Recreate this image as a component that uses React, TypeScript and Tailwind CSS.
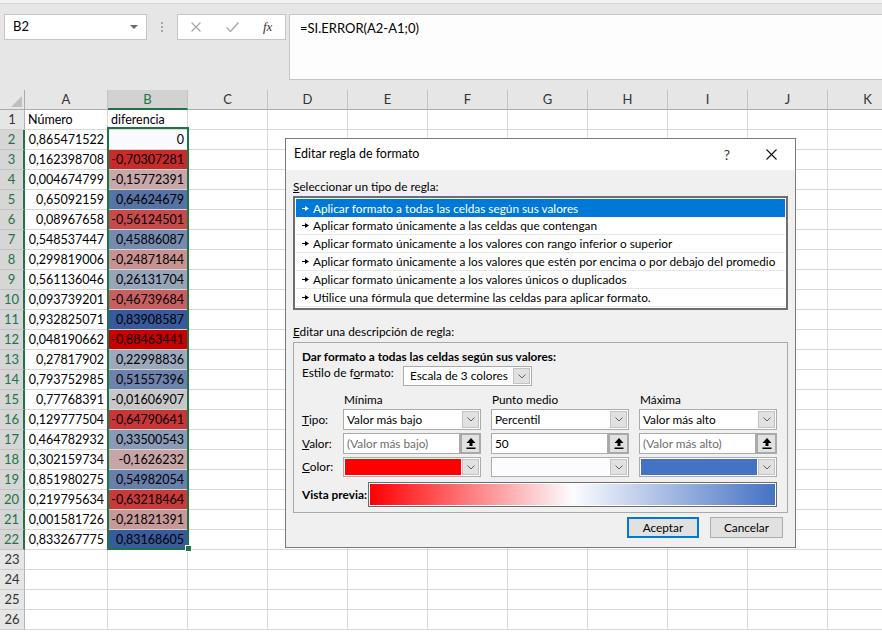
import React from 'react';

const colA = [
  '0,865471522', '0,162398708', '0,004674799', '0,65092159', '0,08967658', '0,548537447', '0,299819006',
  '0,561136046', '0,093739201', '0,932825071', '0,048190662', '0,27817902', '0,793752985', '0,77768391',
  '0,129777504', '0,464782932', '0,302159734', '0,851980275', '0,219795634', '0,001581726', '0,833267775',
];

const colB = [
  0, -0.70307281, -0.15772391, 0.64624679, -0.56124501, 0.45886087, -0.24871844, 0.26131704, -0.46739684,
  0.83908587, -0.88463441, 0.22998836, 0.51557396, -0.01606907, -0.64790641, 0.33500543, -0.1626232,
  0.54982054, -0.63218464, -0.21821391, 0.83168605,
];

const sorted = [...colB].sort((a, b) => a - b);
const vMin = sorted[0];
const vMax = sorted[sorted.length - 1];
const vMid = sorted[Math.floor(sorted.length / 2)];

const mix = (a: number[], b: number[], t: number) => a.map((x, i) => x + (b[i] - x) * t);

// escala de 3 colores, oscurecida cuando la celda está seleccionada
function scaleColor(v: number, shaded: boolean) {
  const red = [255, 0, 0], mid = [252, 252, 255], blue = [68, 114, 196];
  let c = v <= vMid ? mix(red, mid, (v - vMin) / (vMid - vMin)) : mix(mid, blue, (v - vMid) / (vMax - vMid));
  if (shaded) c = c.map(x => x * 0.79);
  return `rgb(${c.map(x => Math.round(x)).join(',')})`;
}

const fmt = (v: number) => (v === 0 ? '0' : String(v).replace('.', ','));

const otherCols = ['C', 'D', 'E', 'F', 'G', 'H', 'I', 'J', 'K'];

const Chevron = () => (
  <svg width="8" height="5" viewBox="0 0 8 5"><path d="M0.5 0.5L4 4L7.5 0.5" fill="none" stroke="#606060" strokeWidth="1" /></svg>
);

const DropButton = () => (
  <div className="w-[17px] my-[1px] mr-[1px] bg-[#e1e1e1] border border-[#c2c2c2] flex items-center justify-center shrink-0">
    <Chevron />
  </div>
);

const RefButton = () => (
  <div className="w-[21px] h-full bg-[#e1e1e1] border-2 border-[#a9a9a9] flex items-center justify-center shrink-0">
    <svg width="10" height="11" viewBox="0 0 10 11">
      <path d="M5 0L9.5 5H6.5V8H3.5V5H0.5Z" fill="#000" />
      <rect x="0.5" y="9.5" width="9" height="1.5" fill="#000" />
    </svg>
  </div>
);

const Combo: React.FC<{ text: string }> = ({ text }) => (
  <div className="w-[138px] h-full bg-white border border-[#acacac] flex">
    <span className="flex-1 pl-[3px] leading-[19px] truncate">{text}</span>
    <DropButton />
  </div>
);

const ColorCombo: React.FC<{ color: string }> = ({ color }) => (
  <div className="w-[138px] h-full bg-white border border-[#acacac] flex">
    <div className="flex-1 m-[1px]" style={{ background: color }} />
    <DropButton />
  </div>
);

const ValueBox: React.FC<{ text: string; muted?: boolean }> = ({ text, muted }) => (
  <div className="w-[138px] h-full flex">
    <div className={`flex-1 bg-white border border-[#acacac] pl-[3px] leading-[19px] ${muted ? 'text-[#6d6d6d]' : ''}`}>{text}</div>
    <RefButton />
  </div>
);

const ItemArrow = () => (
  <svg width="7" height="5" viewBox="0 0 7 5" className="shrink-0"><path d="M0 2H3V0L7 2.5L3 5V3H0Z" fill="currentColor" /></svg>
);

const ruleTypes = [
  'Aplicar formato a todas las celdas según sus valores',
  'Aplicar formato únicamente a las celdas que contengan',
  'Aplicar formato únicamente a los valores con rango inferior o superior',
  'Aplicar formato únicamente a los valores que estén por encima o por debajo del promedio',
  'Aplicar formato únicamente a los valores únicos o duplicados',
  'Utilice una fórmula que determine las celdas para aplicar formato.',
];

const Dialog = () => (
  <div className="absolute left-[285px] top-[138px] w-[511px] h-[410px] border border-[#7a7a7a] bg-[#f0f0f0] flex flex-col font-['Lato',sans-serif] text-[11.8px] text-black">
    <div className="h-[31px] bg-white flex items-center pl-[8px] pr-[18px] shrink-0">
      <span className="text-[12.5px]">Editar regla de formato</span>
      <span className="ml-auto w-[10px] text-center text-[14px] text-[#333]">?</span>
      <svg width="11" height="11" viewBox="0 0 11 11" className="ml-[34px]"><path d="M0.5 0.5L10.5 10.5M10.5 0.5L0.5 10.5" stroke="#111" strokeWidth="1.1" /></svg>
    </div>
    <div className="flex flex-col px-[7px]">
      <div className="pt-[10px] leading-[14px]"><span className="underline">S</span>eleccionar un tipo de regla:</div>
      <div className="mt-[2px] border-2 border-[#6e6e6e] bg-white p-[1px]">
        {ruleTypes.map((t, i) => (
          <div key={t} className={`h-[18px] flex items-center gap-[4px] pl-[6px] ${i === 0 ? 'bg-[#0078d7] text-white' : 'border-b border-[#e8e8e8]'}`}>
            <ItemArrow />
            <span className="leading-[17px] whitespace-nowrap">{t}</span>
          </div>
        ))}
      </div>
      <div className="mt-[15px] leading-[14px]"><span className="underline">E</span>ditar una descripción de regla:</div>
      <div className="mt-[3px] border border-[#a9a9a9] pl-[8px] pt-[7px] pb-[5px] flex flex-col">
        <div className="font-bold leading-[14px]">Dar formato a todas las celdas según sus valores:</div>
        <div className="mt-[2px] flex items-start">
          <span className="w-[101px] leading-[14px]">Estilo de f<span className="underline">o</span>rmato:</span>
          <div className="w-[129px] h-[20px] bg-white border border-[#acacac] flex">
            <span className="flex-1 pl-[6px] leading-[18px]">Escala de 3 colores</span>
            <DropButton />
          </div>
        </div>
        <div className="mt-[7px] flex leading-[14px]">
          <span className="w-[41px]" />
          <div className="flex gap-[10px]">
            <span className="w-[138px] pl-[1px]">Mínima</span>
            <span className="w-[138px] pl-[1px]">Punto medio</span>
            <span className="w-[138px] pl-[1px]">Máxima</span>
          </div>
        </div>
        <div className="mt-[2px] h-[21px] flex items-center">
          <span className="w-[41px]"><span className="underline">T</span>ipo:</span>
          <div className="flex gap-[10px] h-full">
            <Combo text="Valor más bajo" />
            <Combo text="Percentil" />
            <Combo text="Valor más alto" />
          </div>
        </div>
        <div className="mt-[3px] h-[21px] flex items-center">
          <span className="w-[41px]"><span className="underline">V</span>alor:</span>
          <div className="flex gap-[10px] h-full">
            <ValueBox text="(Valor más bajo)" muted />
            <ValueBox text="50" />
            <ValueBox text="(Valor más alto)" muted />
          </div>
        </div>
        <div className="mt-[3px] h-[20px] flex items-center">
          <span className="w-[41px]"><span className="underline">C</span>olor:</span>
          <div className="flex gap-[10px] h-full">
            <ColorCombo color="#ff0000" />
            <ColorCombo color="#fcfcff" />
            <ColorCombo color="#4472c4" />
          </div>
        </div>
        <div className="mt-[5px] h-[25px] flex items-center">
          <span className="w-[66px] shrink-0 font-bold whitespace-nowrap">Vista previa:</span>
          <div className="w-[409px] h-full border border-[#6b6b6b] bg-white p-[1px]">
            <div className="h-full bg-[linear-gradient(to_right,#ff0000,#fcfcff_50%,#4472c4)]" />
          </div>
        </div>
      </div>
    </div>
    <div className="mt-[4px] flex justify-end gap-[11px] pr-[12px]">
      <button className="w-[72px] h-[21px] bg-[#e1e1e1] border-2 border-[#0078d7] leading-[17px]">Aceptar</button>
      <button className="w-[73px] h-[21px] bg-[#e1e1e1] border border-[#adadad] leading-[19px]">Cancelar</button>
    </div>
  </div>
);

const Cell: React.FC<{ w: string; children?: React.ReactNode; right?: boolean; bg?: string }> = ({ w, children, right, bg }) => (
  <div
    className={`${w} h-[20px] shrink-0 border-r border-b border-[#d9d9d9] px-[3px] leading-[19px] whitespace-nowrap overflow-hidden ${right ? 'text-right' : ''}`}
    style={bg ? { background: bg } : undefined}
  >
    {children}
  </div>
);

const RowHead: React.FC<{ n: number; sel: boolean }> = ({ n, sel }) => (
  <div
    className={`w-[25px] h-[20px] shrink-0 text-center leading-[19px] text-[13px] border-b ${
      sel ? 'bg-[#d6d6d6] text-[#217346] border-r-2 border-r-[#217346] border-b-[#c4c4c4]' : 'bg-[#e6e6e6] text-[#333] border-r border-r-[#b5b5b5] border-b-[#cfcfcf]'
    }`}
  >
    {n}
  </div>
);

export default function App() {
  const rows = Array.from({ length: 26 }, (_, i) => i + 1);
  return (
    <div className="relative w-[882px] h-[635px] overflow-hidden bg-white font-['Lato',sans-serif] text-black">
      <div className="h-[4px] bg-[#f3f3f3] border-b border-[#d5d5d5]" />
      <div className="bg-[#e6e6e6] pt-[10px] pb-[10px] flex items-start">
        <div className="ml-[4px] w-[143px] h-[26px] bg-white border border-[#c6c6c6] flex items-center pl-[8px] pr-[8px] text-[13px]">
          <span className="flex-1">B2</span>
          <svg width="8" height="4" viewBox="0 0 8 4"><path d="M0 0H8L4 4Z" fill="#6b6b6b" /></svg>
        </div>
        <div className="w-[30px] h-[26px] flex flex-col items-center justify-center gap-[2px]">
          <span className="w-[2px] h-[2px] bg-[#a6a6a6]" />
          <span className="w-[2px] h-[2px] bg-[#a6a6a6]" />
          <span className="w-[2px] h-[2px] bg-[#a6a6a6]" />
        </div>
        <div className="w-[109px] h-[26px] bg-white border border-[#c6c6c6] flex items-center pl-[13px]">
          <svg width="10" height="10" viewBox="0 0 10 10"><path d="M0.5 0.5L9.5 9.5M9.5 0.5L0.5 9.5" stroke="#a6a6a6" strokeWidth="1.2" /></svg>
          <svg width="13" height="10" viewBox="0 0 13 10" className="ml-[25px]"><path d="M0.5 5.5L4.5 9.5L12.5 0.5" fill="none" stroke="#a6a6a6" strokeWidth="1.3" /></svg>
          <span className="ml-[24px] font-['Liberation_Serif',serif] italic text-[13px] text-[#333]">fx</span>
        </div>
        <div className="ml-[3px] flex-1 h-[66px] bg-[#fdfdfd] border-y border-l border-[#c6c6c6] pl-[10px] pt-[4px] text-[13px] leading-[18px]">
          =SI.ERROR(A2-A1;0)
        </div>
      </div>

      <div className="relative text-[12.5px]">
        <div className="flex h-[20px]">
          <div className="w-[25px] h-[20px] shrink-0 bg-[#e6e6e6] border-r border-b border-[#ababab] flex items-end justify-end p-[2px]">
            <svg width="11" height="11" viewBox="0 0 11 11"><path d="M11 0V11H0Z" fill="#bfbfbf" /></svg>
          </div>
          <div className="w-[83px] shrink-0 bg-[#e6e6e6] border-r border-r-[#c4c4c4] border-b border-b-[#ababab] text-center leading-[19px] text-[13px] text-[#333]">A</div>
          <div className="w-[80px] shrink-0 bg-[#d2d2d2] border-r border-r-[#c4c4c4] border-b-2 border-b-[#217346] text-center leading-[19px] text-[13px] text-[#217346]">B</div>
          {otherCols.map(c => (
            <div key={c} className="w-[80px] shrink-0 bg-[#e6e6e6] border-r border-r-[#c4c4c4] border-b border-b-[#ababab] text-center leading-[19px] text-[13px] text-[#333]">{c}</div>
          ))}
        </div>
        {rows.map(r => {
          const sel = r >= 2 && r <= 22;
          const idx = r - 2;
          return (
            <div key={r} className="flex">
              <RowHead n={r} sel={sel} />
              {r === 1 ? (
                <>
                  <Cell w="w-[83px]">Número</Cell>
                  <Cell w="w-[80px]">diferencia</Cell>
                </>
              ) : sel ? (
                <>
                  <Cell w="w-[83px]" right>{colA[idx]}</Cell>
                  <Cell w="w-[80px]" right bg={scaleColor(colB[idx], r !== 2)}>{fmt(colB[idx])}</Cell>
                </>
              ) : (
                <>
                  <Cell w="w-[83px]" />
                  <Cell w="w-[80px]" />
                </>
              )}
              {otherCols.map(c => <Cell key={c} w="w-[80px]" />)}
            </div>
          );
        })}
        <div className="absolute left-[107px] top-[37px] w-[82px] h-[423px] border-2 border-[#217346]" />
        <div className="absolute left-[185px] top-[455px] w-[7px] h-[7px] bg-[#217346] border border-white" />
      </div>

      <Dialog />
    </div>
  );
}
